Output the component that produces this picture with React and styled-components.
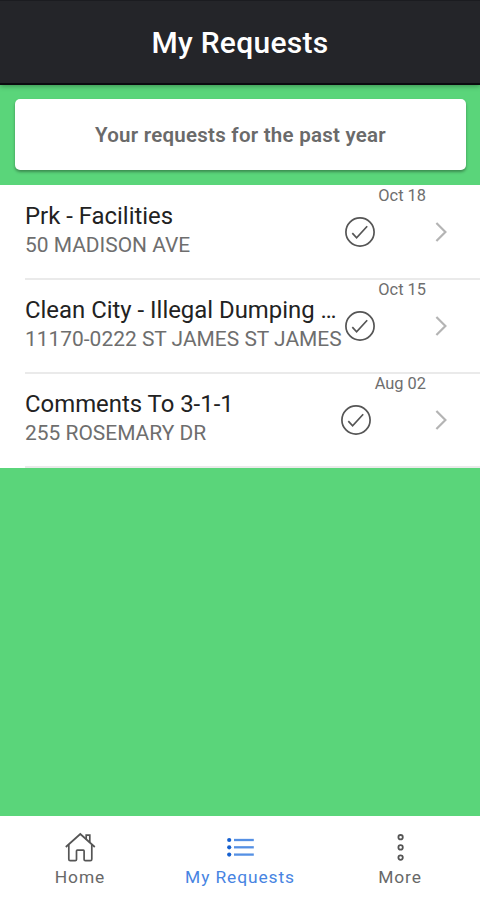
import React from "react";
import styled, { createGlobalStyle } from "styled-components";

const requests = [
  { title: "Prk - Facilities", address: "50 MADISON AVE", date: "Oct 18" },
  {
    title: "Clean City - Illegal Dumping …",
    address: "11170-0222 ST JAMES ST JAMES",
    date: "Oct 15",
  },
  { title: "Comments To 3-1-1", address: "255 ROSEMARY DR", date: "Aug 02" },
];

const CheckIcon = () => (
  <CheckSvg viewBox="0 0 30 30">
    <circle cx="15" cy="15" r="14.1" />
    <path d="M7.3 16.2 L11.6 20.8 L22.2 9.2" />
  </CheckSvg>
);

const HomeIcon = () => (
  <TabSvg viewBox="0 0 34 34">
    <path d="M2.8 17 L17.3 4 L31.8 17" />
    <path d="M23.2 9.2 V5.2 H26.8 V12.4" />
    <path d="M5.8 14.6 V29.2 Q5.8 30.7 7.3 30.7 H12.2 Q13.5 30.7 13.5 29.4 V21 Q13.5 20.2 14.3 20.2 H20.3 Q21.1 20.2 21.1 21 V29.4 Q21.1 30.7 22.4 30.7 H27.3 Q28.8 30.7 28.8 29.2 V14.6" />
  </TabSvg>
);

const ListIcon = () => (
  <TabSvg viewBox="0 0 34 34">
    {[10, 17.3, 24.6].map((y) => (
      <g key={y}>
        <circle cx="6.2" cy={y} r="2.1" fill="#1560d0" stroke="none" />
        <path d={`M11 ${y} H30.8`} stroke="#5590e4" strokeWidth="2.3" />
      </g>
    ))}
  </TabSvg>
);

const MoreIcon = () => (
  <TabSvg viewBox="0 0 34 34">
    {[7.2, 17.4, 27.6].map((y) => (
      <circle key={y} cx="17.6" cy={y} r="2.2" strokeWidth="1.8" />
    ))}
  </TabSvg>
);

const RequestRow = ({ title, address, date }) => (
  <Row>
    <RowText>
      <RowTitle>{title}</RowTitle>
      <RowAddress>{address}</RowAddress>
    </RowText>
    <CheckIcon />
    <RowDate>{date}</RowDate>
    <Chevron viewBox="0 0 14 22">
      <path d="M2.4 2 L11.4 11 L2.4 20" />
    </Chevron>
  </Row>
);

const App = () => {
  return (
    <Screen>
      <GlobalStyle />
      <Header>My Requests</Header>
      <Content>
        <Card>Your requests for the past year</Card>
        <List>
          {requests.map((request) => (
            <RequestRow key={request.title} {...request} />
          ))}
        </List>
      </Content>
      <TabBar>
        <Tab>
          <HomeIcon />
          <TabLabel>Home</TabLabel>
        </Tab>
        <Tab $active>
          <ListIcon />
          <TabLabel>My Requests</TabLabel>
        </Tab>
        <Tab>
          <MoreIcon />
          <TabLabel>More</TabLabel>
        </Tab>
      </TabBar>
    </Screen>
  );
};

const GlobalStyle = createGlobalStyle`
  * {
    box-sizing: border-box;
  }
  body {
    margin: 0;
    font-family: Roboto, sans-serif;
  }
`;

const Screen = styled.div`
  display: flex;
  flex-direction: column;
  height: 100vh;
  overflow: hidden;
  background: #5ad57a;
`;

const Header = styled.header`
  height: 85px;
  flex: none;
  z-index: 1;
  border-top: 1px solid #1b1c20;
  border-bottom: 2px solid #0b0b0f;
  background: #242529;
  box-shadow: 0 1px 5px rgba(0, 0, 0, 0.35);
  color: #fff;
  font-size: 30px;
  font-weight: 500;
  line-height: 84px;
  letter-spacing: 0.3px;
  text-align: center;
`;

const Content = styled.main`
  flex: 1;
  min-height: 0;
`;

const Card = styled.div`
  height: 71px;
  margin: 14px 14px 15px 15px;
  border-radius: 5px;
  background: #fff;
  box-shadow: 0 2px 3px rgba(0, 0, 0, 0.35);
  color: #6a6a6a;
  font-size: 20.5px;
  font-weight: 600;
  line-height: 72px;
  letter-spacing: 0.25px;
  text-align: center;
`;

const List = styled.div`
  padding: 0.6px 0 0 25px;
  background: #fff;
`;

const Row = styled.div`
  display: flex;
  align-items: center;
  height: 94.1px;
  padding-right: 32px;
  border-bottom: 2px solid #eaeaea;
`;

const RowText = styled.div`
  flex: 1;
  min-width: 0;
  padding-bottom: 3px;
  white-space: nowrap;
`;

const RowTitle = styled.div`
  color: #222;
  font-size: 23.9px;
  line-height: 30px;
`;

const RowAddress = styled.div`
  color: #6e6e6e;
  font-size: 20.95px;
  line-height: 28px;
`;

const RowDate = styled.div`
  align-self: flex-start;
  margin-left: 3.4px;
  color: #6e6e6e;
  font-size: 16.4px;
  line-height: 19px;
`;

const CheckSvg = styled.svg`
  width: 30px;
  height: 30px;
  flex: none;
  fill: none;
  stroke: #555;
  stroke-width: 1.7;
`;

const Chevron = styled.svg`
  width: 14px;
  height: 22px;
  flex: none;
  margin-left: 8px;
  fill: none;
  stroke: #b4b4b4;
  stroke-width: 2.2;
`;

const TabBar = styled.nav`
  display: flex;
  height: 84px;
  flex: none;
  background: #fff;
`;

const Tab = styled.div`
  flex: 1;
  display: flex;
  flex-direction: column;
  align-items: center;
  padding-top: 14px;
  color: ${(props) => (props.$active ? "#4784e2" : "#686868")};
`;

const TabSvg = styled.svg`
  width: 34px;
  height: 34px;
  fill: none;
  stroke: #555;
  stroke-width: 1.7;
`;

const TabLabel = styled.span`
  font-size: 17.4px;
  line-height: 26px;
  letter-spacing: 0.9px;
`;

export default App;
